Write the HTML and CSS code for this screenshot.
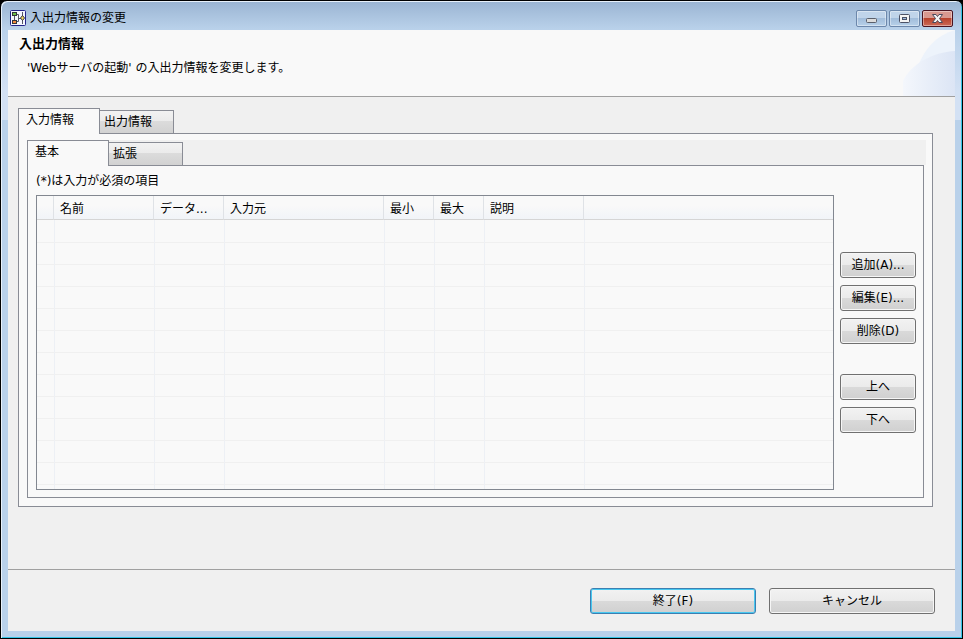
FILE: index.html
```html
<!DOCTYPE html>
<html lang="ja">
<head>
    <meta charset="UTF-8">
    <meta name="viewport" content="width=device-width, initial-scale=1.0">
    <title>入出力情報の変更</title>
    <link rel="stylesheet" href="styles.css">
</head>
<body>
    <div class="window">
        <header class="titlebar">
            <svg class="app-icon" viewBox="0 0 16 16" aria-hidden="true">
                <rect x="0.5" y="0.5" width="15" height="15" rx="1" fill="#f4f7ff" stroke="#23238a"/>
                <path d="M4.5 6v4M7 4.5h1.5v7H7M8.5 8.500H11M12.500 2v12" fill="none" stroke="#556"/>
                <path d="M2 2h5v4H2zM2 10h5v4H2z" fill="#33363c"/>
                <path d="M3 3h3v2H3z" fill="#6cc04a"/>
                <path d="M3 11h3v2H3z" fill="#f58a3c"/>
                <path d="M12.500 5.500l2 2.500-2 2.500-2-2.500z" fill="#f0d65a" stroke="#334"/>
            </svg>
            <span class="window-title">入出力情報の変更</span>
            <div class="window-controls">
                <button type="button" class="control" aria-label="最小化">
                    <svg viewBox="0 0 31 17"><rect x="10.5" y="8.5" width="10" height="4" rx="1" fill="#dcdcdc" stroke="#5a5f6b"/></svg>
                </button>
                <button type="button" class="control" aria-label="最大化">
                    <svg viewBox="0 0 31 17"><rect x="10.5" y="4.5" width="10" height="8" rx="1" fill="#f4f4f4" stroke="#4c5266"/><rect x="13.5" y="7.5" width="4" height="2" fill="#9dbbe0" stroke="#4c5266"/></svg>
                </button>
                <button type="button" class="control control-close" aria-label="閉じる">
                    <svg viewBox="0 0 31 17"><path d="M10.5 4.5h3.500l1.500 2 1.500-2h3.500l-3 4 3 4H17l-1.500-2-1.500 2h-3.500l3-4z" fill="#f4f4f4" stroke="#4c4a5c"/></svg>
                </button>
            </div>
        </header>

        <main class="dialog">
            <section class="banner">
                <h1 class="banner-title">入出力情報</h1>
                <p class="banner-text">'Webサーバの起動' の入出力情報を変更します。</p>
                <svg class="banner-art" viewBox="0 0 52 66" aria-hidden="true">
                    <defs>
                        <linearGradient id="swoosh" x1="0" x2="1">
                            <stop offset="0" stop-color="#f4f7fc"/>
                            <stop offset="1" stop-color="#dce5f5"/>
                        </linearGradient>
                    </defs>
                    <path d="M52 0C34 5 22 18 15 36L52 30z" fill="#edf3fb"/>
                    <path d="M0 66V51C8 34 30 22 52 21v45z" fill="url(#swoosh)"/>
                </svg>
            </section>

            <div class="content">
                <div class="tabs" role="tablist">
                    <button type="button" class="tab tab-active" role="tab" aria-selected="true">入力情報</button>
                    <button type="button" class="tab" role="tab" aria-selected="false">出力情報</button>
                </div>
                <div class="panel" role="tabpanel">
                    <div class="tabs tabs-inner" role="tablist">
                        <button type="button" class="tab tab-active" role="tab" aria-selected="true">基本</button>
                        <button type="button" class="tab" role="tab" aria-selected="false">拡張</button>
                    </div>
                    <div class="panel panel-inner" role="tabpanel">
                        <p class="note">(*)は入力が必須の項目</p>
                        <div class="editor">
                            <div class="table-box">
                                <table class="grid">
                                    <colgroup>
                                        <col class="col-mark">
                                        <col class="col-name">
                                        <col class="col-type">
                                        <col class="col-source">
                                        <col class="col-limit">
                                        <col class="col-limit">
                                        <col class="col-name">
                                        <col>
                                    </colgroup>
                                    <thead>
                                        <tr><th></th><th>名前</th><th>データ...</th><th>入力元</th><th>最小</th><th>最大</th><th>説明</th><th></th></tr>
                                    </thead>
                                    <tbody>
                                        <tr><td></td><td></td><td></td><td></td><td></td><td></td><td></td><td></td></tr>
                                        <tr><td></td><td></td><td></td><td></td><td></td><td></td><td></td><td></td></tr>
                                        <tr><td></td><td></td><td></td><td></td><td></td><td></td><td></td><td></td></tr>
                                        <tr><td></td><td></td><td></td><td></td><td></td><td></td><td></td><td></td></tr>
                                        <tr><td></td><td></td><td></td><td></td><td></td><td></td><td></td><td></td></tr>
                                        <tr><td></td><td></td><td></td><td></td><td></td><td></td><td></td><td></td></tr>
                                        <tr><td></td><td></td><td></td><td></td><td></td><td></td><td></td><td></td></tr>
                                        <tr><td></td><td></td><td></td><td></td><td></td><td></td><td></td><td></td></tr>
                                        <tr><td></td><td></td><td></td><td></td><td></td><td></td><td></td><td></td></tr>
                                        <tr><td></td><td></td><td></td><td></td><td></td><td></td><td></td><td></td></tr>
                                        <tr><td></td><td></td><td></td><td></td><td></td><td></td><td></td><td></td></tr>
                                        <tr><td></td><td></td><td></td><td></td><td></td><td></td><td></td><td></td></tr>
                                        <tr><td></td><td></td><td></td><td></td><td></td><td></td><td></td><td></td></tr>
                                    </tbody>
                                </table>
                            </div>
                            <div class="actions">
                                <div class="action-group">
                                    <button type="button" class="button">追加(A)...</button>
                                    <button type="button" class="button">編集(E)...</button>
                                    <button type="button" class="button">削除(D)</button>
                                </div>
                                <div class="action-group">
                                    <button type="button" class="button">上へ</button>
                                    <button type="button" class="button">下へ</button>
                                </div>
                            </div>
                        </div>
                    </div>
                </div>
            </div>

            <footer class="footer">
                <button type="button" class="button button-wide button-default">終了(F)</button>
                <button type="button" class="button button-wide">キャンセル</button>
            </footer>
        </main>
    </div>
</body>
</html>
```
FILE: styles.css
```css
* {
    margin: 0;
    padding: 0;
    box-sizing: border-box;
}

body {
    font-family: "DejaVu Sans", "Noto Sans CJK JP", sans-serif;
    font-size: 12px;
    line-height: 16px;
    color: #000;
    background: #000;
}

button {
    font: inherit;
    color: inherit;
}

.window {
    min-height: 100vh;
    display: flex;
    flex-direction: column;
    padding: 1px 7px 7px;
    border: 1px solid #000;
    border-radius: 7px 7px 0 0;
    background: linear-gradient(#9ab4d2, #b9d1ea 28px, #d3e1f4 90px, #d3e1f4 119px, #b9d1ea 119px);
    box-shadow: inset 1px 1px 0 #e8f1fa, inset -1px -1px 0 #35c4e6;
}

/* Title bar */
.titlebar {
    height: 28px;
    display: flex;
    align-items: center;
    gap: 4px;
    padding: 4px 2px 0;
}

.app-icon {
    width: 16px;
    height: 16px;
}

.window-title {
    flex: 1;
}

.window-controls {
    display: flex;
    gap: 2px;
}

.control {
    width: 31px;
    height: 17px;
    border: 1px solid #6c87ab;
    border-radius: 2px;
    background: linear-gradient(#c0d4ea 50%, #a2bddb 50%, #b7d0e9);
    box-shadow: inset 0 0 0 1px rgba(255, 255, 255, 0.4);
}

.control svg {
    display: block;
    width: 31px;
    height: 17px;
    margin: -1px;
}

.control-close {
    border-color: #4a1420;
    background: linear-gradient(#d9998f 50%, #b8432c 50%, #cc6a58);
}

/* Dialog area */
.dialog {
    flex: 1;
    display: flex;
    flex-direction: column;
    background: #f0f0f0;
}

.banner {
    position: relative;
    height: 67px;
    padding: 6px 11px;
    border-bottom: 1px solid #a0a0a0;
    background: #f9f9f9;
}

.banner-title {
    font-size: 13px;
    font-weight: bold;
}

.banner-text {
    padding: 8px;
}

.banner-art {
    position: absolute;
    top: 0;
    right: 0;
    width: 52px;
    height: 66px;
}

.content {
    flex: 1;
    padding: 11px 22px 16px 10px;
}

/* Tabs */
.tabs {
    display: flex;
    align-items: flex-end;
    height: 25px;
}

.tab {
    width: 74px;
    height: 23px;
    padding: 0 4px;
    border: 1px solid #898c95;
    border-bottom: 0;
    border-left: 0;
    background: linear-gradient(#f2f2f2, #ebebeb 45%, #dcdcdc 45%, #d2d2d2);
    text-align: left;
}

.tab-active {
    position: relative;
    width: 82px;
    height: 26px;
    margin-bottom: -1px;
    padding: 0 7px 4px;
    border-left: 1px solid #898c95;
    background: #f9f9f9;
}

.panel {
    padding: 6px 8px 8px;
    border: 1px solid #898c95;
    background: #f9f9f9;
}

.tabs-inner {
    margin-right: -2px;
    background: #f0f0f0;
}

.panel-inner {
    padding: 7px 7px 7px 8px;
}

.note {
    padding-bottom: 6px;
}

.editor {
    display: flex;
    align-items: center;
    gap: 6px;
}

/* Parameter table */
.table-box {
    flex: 1;
    height: 295px;
    border: 1px solid #828790;
    overflow: hidden;
}

.grid {
    width: 100%;
    table-layout: fixed;
    border-collapse: separate;
    border-spacing: 0;
}

.col-mark {
    width: 17px;
}

.col-name {
    width: 100px;
}

.col-type {
    width: 70px;
}

.col-source {
    width: 160px;
}

.col-limit {
    width: 50px;
}

.grid th {
    height: 24px;
    padding: 2px 6px 0;
    border-right: 1px solid #dfe2e6;
    border-bottom: 1px solid #d5d5d5;
    background: linear-gradient(#f9f9f9 40%, #f1f4f8);
    font-weight: normal;
    text-align: left;
    white-space: nowrap;
}

.grid th:last-child {
    border-right: 0;
}

.grid td {
    height: 22px;
    border-top: 1px solid #f0f0f0;
    border-left: 1px solid #edf0f5;
}

.grid td:first-child {
    border-left: 0;
}

.grid tbody tr:first-child td {
    border-top: 0;
}

/* Buttons */
.actions {
    display: flex;
    flex-direction: column;
    gap: 30px;
}

.action-group {
    display: flex;
    flex-direction: column;
    gap: 7px;
}

.button {
    width: 76px;
    height: 26px;
    border: 1px solid #707070;
    border-radius: 3px;
    background: linear-gradient(#f2f2f2, #ebebeb 48%, #dadada 48%, #d0d0d0);
    box-shadow: inset 0 0 0 1px #f6f6f6;
}

.button-wide {
    width: 166px;
}

.button-default {
    border-color: #3c7fb1;
    box-shadow: inset 0 0 0 1px #48c8f0;
}

.footer {
    display: flex;
    justify-content: flex-end;
    gap: 13px;
    padding: 18px 20px 17px;
    border-top: 1px solid #a0a0a0;
}
```
